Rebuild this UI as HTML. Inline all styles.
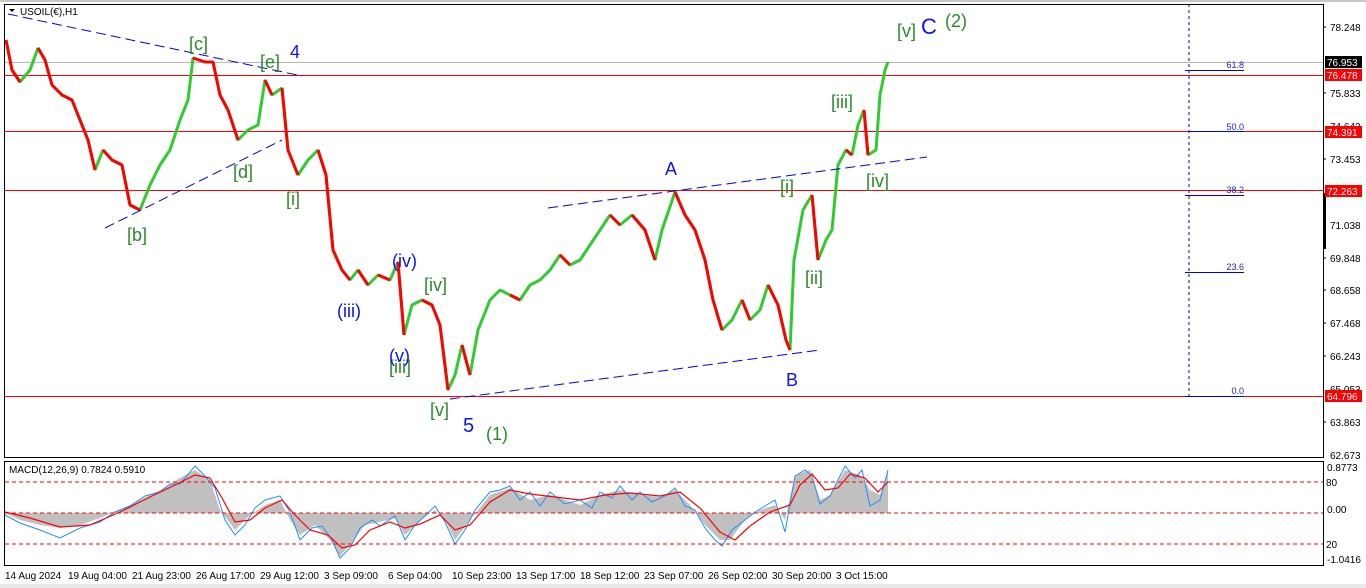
<!DOCTYPE html>
<html><head><meta charset="utf-8"><style>
html,body{margin:0;padding:0;background:#fff;width:1366px;height:588px;overflow:hidden}
svg{display:block;font-family:"Liberation Sans",Tahoma,sans-serif}
</style></head><body>
<svg width="1366" height="588" xmlns="http://www.w3.org/2000/svg">
<rect x="0" y="0" width="1366" height="588" fill="#fff"/>
<rect x="0" y="0" width="1366" height="2" fill="#c8c8c8"/>
<rect x="0" y="584" width="1366" height="4" fill="#e8e8e8"/>
<!-- horizontal lines -->
<rect x="4" y="62" width="1319" height="1" fill="#b8b8b8"/>
<rect x="4" y="75" width="1319" height="1" fill="#ff0000"/>
<rect x="4" y="131" width="1319" height="1" fill="#ff0000"/>
<rect x="4" y="190" width="1319" height="1" fill="#ff0000"/>
<rect x="4" y="396" width="1319" height="1" fill="#ff0000"/>
<!-- price -->
<path d="M6 40 L12 70 L20 82 L30 70 L38 48 L45 60 L52 85 L62 95 L72 100 L80 120 L88 140 L95 170 L103 150 L112 160 L122 165 L130 205 L140 210 L150 185 L160 165 L170 150 L180 120 L188 100 L193 58 L205 62 L213 62 L220 95 L228 110 L238 140 L248 130 L258 125 L265 80 L272 95 L282 88 L288 150 L298 175 L308 160 L318 150 L326 175 L333 250 L342 270 L350 280 L358 270 L368 285 L378 275 L390 280 L398 262 L404 335 L412 305 L422 300 L432 305 L440 325 L448 390 L455 375 L462 345 L470 375 L478 330 L490 300 L500 290 L510 295 L520 300 L530 285 L540 280 L550 270 L560 255 L570 265 L580 260 L590 245 L600 230 L610 215 L620 225 L632 215 L645 230 L655 260 L662 230 L675 192 L685 215 L695 230 L705 260 L713 300 L722 330 L732 320 L742 300 L750 320 L760 310 L768 285 L778 305 L786 340 L790 350 L794 260 L803 210 L812 195 L818 260 L826 240 L832 230 L838 165 L846 150 L852 155 L858 125 L864 110 L868 155 L876 150 L880 95 L885 70 L888 62" stroke="#2ecc2e" stroke-width="3" fill="none" stroke-linejoin="bevel"/>
<path d="M6 40 L12 70 L20 82 M38 48 L45 60 L52 85 L62 95 L72 100 L80 120 L88 140 L95 170 M103 150 L112 160 L122 165 L130 205 L140 210 M193 58 L205 62 L213 62 L220 95 L228 110 L238 140 M265 80 L272 95 M282 88 L288 150 L298 175 M318 150 L326 175 L333 250 L342 270 L350 280 M358 270 L368 285 M378 275 L390 280 M398 262 L404 335 M422 300 L432 305 L440 325 L448 390 M462 345 L470 375 M510 295 L520 300 M560 255 L570 265 M610 215 L620 225 M632 215 L645 230 L655 260 M675 192 L685 215 L695 230 L705 260 L713 300 L722 330 M742 300 L750 320 M768 285 L778 305 L786 340 L790 350 M812 195 L818 260 M846 150 L852 155 M864 110 L868 155" stroke="#ff0000" stroke-width="3" fill="none" stroke-linejoin="bevel"/>
<!-- MACD -->
<polygon points="5,513 20,520 40,525 60,528 80,525 100,518 130,505 160,490 180,478 195,470 210,480 220,510 235,530 250,515 265,505 280,500 290,520 300,535 315,525 330,540 340,556 350,545 365,525 380,522 395,518 405,535 420,520 435,510 445,520 455,540 470,520 490,495 510,488 530,500 550,495 580,505 600,495 620,490 640,495 660,497 675,490 690,505 705,525 720,540 730,540 745,520 760,510 775,505 785,520 795,475 810,470 820,500 830,495 845,470 860,475 870,490 880,495 888,470 888,513" fill="#c0c0c0"/>
<polyline points="5,515 20,523 40,530 60,538 80,528 100,522 115,512 130,506 145,496 160,492 170,484 180,484 195,466 205,476 215,488 225,520 235,535 245,525 255,508 265,500 280,496 290,512 300,540 312,528 322,526 332,540 340,558 350,548 360,528 372,520 380,526 395,516 405,540 415,525 425,516 435,506 445,522 455,544 465,530 475,510 490,492 500,490 510,486 520,500 530,492 540,506 550,492 565,504 580,500 592,508 600,492 612,498 620,486 632,500 640,492 652,502 665,496 675,488 685,506 695,510 705,528 715,540 722,546 732,530 745,520 755,512 765,506 775,500 785,532 795,476 805,470 812,476 820,504 830,496 838,480 845,466 855,478 862,470 870,506 880,500 888,470" fill="none" stroke="#1e90ff" stroke-width="1"/>
<polyline points="5,512 30,518 60,527 90,525 120,512 150,497 175,485 195,475 210,478 222,498 235,522 250,520 265,508 282,500 295,515 310,530 328,535 342,548 355,545 370,530 390,522 405,528 420,524 440,515 455,530 470,525 490,502 510,490 530,494 555,497 580,500 605,495 630,493 660,496 680,492 700,508 720,532 735,540 750,526 770,512 790,505 800,485 812,474 825,490 838,488 850,474 865,478 878,492 888,482" fill="none" stroke="#ff0000" stroke-width="1.2"/>
<!-- trend lines -->
<g stroke="#0000e0" stroke-width="1" stroke-dasharray="10,5" fill="none">
<line x1="8" y1="14" x2="302" y2="76"/>
<line x1="105" y1="228" x2="282" y2="140"/>
<line x1="548" y1="208" x2="927" y2="157"/>
<line x1="450" y1="399" x2="820" y2="350"/>
</g>
<!-- fib -->
<line x1="1189" y1="4" x2="1189" y2="396" stroke="#0000e0" stroke-dasharray="3,3"/>
<g fill="#0000e0"><rect x="1185" y="70" width="59" height="1"/><rect x="1189" y="131" width="55" height="1"/><rect x="1185" y="195" width="59" height="1"/><rect x="1185" y="272" width="59" height="1"/><rect x="1185" y="396" width="59" height="1"/></g>
<g fill="#2020c0" font-size="9" text-anchor="end"><text x="1244" y="68">61.8</text><text x="1244" y="130">50.0</text><text x="1244" y="193">38.2</text><text x="1244" y="270">23.6</text><text x="1244" y="394">0.0</text></g>
<!-- frames -->
<rect x="4.5" y="4.5" width="1319" height="453" fill="none" stroke="#000"/>
<rect x="4.5" y="461.5" width="1319" height="104" fill="none" stroke="#000"/>
<g stroke="#ff0000" stroke-dasharray="4,3"><line x1="5" y1="482" x2="1323" y2="482"/><line x1="5" y1="513" x2="1323" y2="513"/><line x1="5" y1="544" x2="1323" y2="544"/></g>
<!-- axis labels -->
<g font-size="10" fill="#000">
<text x="1330" y="31">78.248</text><text x="1330" y="97">75.833</text><text x="1330" y="130">74.643</text><text x="1330" y="163">73.453</text><text x="1330" y="229">71.038</text><text x="1330" y="262">69.848</text><text x="1330" y="294">68.658</text><text x="1330" y="327">67.468</text><text x="1330" y="360">66.243</text><text x="1330" y="393">65.053</text><text x="1330" y="426">63.863</text><text x="1330" y="459">62.673</text>
<text x="1327" y="471">0.8773</text><text x="1326" y="486">80</text><text x="1327" y="513">0.00</text><text x="1326" y="548">20</text><text x="1327" y="563">-1.0416</text>
</g>
<g stroke="#000"><line x1="1323" y1="27" x2="1326" y2="27"/><line x1="1323" y1="93" x2="1326" y2="93"/><line x1="1323" y1="159" x2="1326" y2="159"/><line x1="1323" y1="225" x2="1326" y2="225"/><line x1="1323" y1="258" x2="1326" y2="258"/><line x1="1323" y1="290" x2="1326" y2="290"/><line x1="1323" y1="323" x2="1326" y2="323"/><line x1="1323" y1="356" x2="1326" y2="356"/><line x1="1323" y1="422" x2="1326" y2="422"/></g>
<rect x="1323" y="193" width="3" height="56" fill="#000"/>
<rect x="1325" y="56" width="37" height="12" fill="#000"/><text x="1327" y="66" font-size="10" fill="#fff">76.953</text>
<rect x="1325" y="69" width="37" height="12" fill="#ff0000"/><text x="1327" y="79" font-size="10" fill="#fff">76.478</text>
<rect x="1325" y="126" width="37" height="12" fill="#ff0000"/><text x="1327" y="136" font-size="10" fill="#fff">74.391</text>
<rect x="1325" y="185" width="37" height="12" fill="#ff0000"/><text x="1327" y="195" font-size="10" fill="#fff">72.263</text>
<rect x="1325" y="390" width="37" height="12" fill="#ff0000"/><text x="1327" y="400" font-size="10" fill="#fff">64.796</text>
<!-- title -->
<path d="M9 9 L15 9 L12 12 Z" fill="#000"/>
<text x="20" y="15" font-size="10" fill="#000">USOIL(€),H1</text>
<text x="9" y="473" font-size="10" fill="#000">MACD(12,26,9) 0.7824 0.5910</text>
<!-- dates -->
<g font-size="10" fill="#000">
<text x="5" y="579">14 Aug 2024</text><text x="68" y="579">19 Aug 04:00</text><text x="132" y="579">21 Aug 23:00</text><text x="196" y="579">26 Aug 17:00</text><text x="260" y="579">29 Aug 12:00</text><text x="324" y="579">3 Sep 09:00</text><text x="388" y="579">6 Sep 04:00</text><text x="452" y="579">10 Sep 23:00</text><text x="516" y="579">13 Sep 17:00</text><text x="580" y="579">18 Sep 12:00</text><text x="644" y="579">23 Sep 07:00</text><text x="708" y="579">26 Sep 02:00</text><text x="772" y="579">30 Sep 20:00</text><text x="836" y="579">3 Oct 15:00</text>
</g>
<!-- wave labels -->
<g font-size="18" fill="#2a8a2a">
<text x="189" y="50">[c]</text><text x="260" y="68">[e]</text><text x="233" y="178">[d]</text><text x="127" y="241">[b]</text>
<text x="286" y="205">[i]</text><text x="424" y="291">[iv]</text><text x="389" y="373">[iii]</text><text x="430" y="416">[v]</text>
<text x="486" y="440">(1)</text><text x="780" y="193">[i]</text><text x="805" y="284">[ii]</text><text x="831" y="108">[iii]</text><text x="866" y="187">[iv]</text>
<text x="897" y="37">[v]</text><text x="945" y="27">(2)</text>
</g>
<g font-size="18" fill="#1010f0">
<text x="290" y="58">4</text><text x="392" y="267">(iv)</text><text x="337" y="317">(iii)</text><text x="389" y="362">(v)</text>
<text x="463" y="432" font-size="20">5</text><text x="665" y="175">A</text><text x="786" y="386">B</text><text x="921" y="34" font-size="22">C</text>
</g>
</svg>
</body></html>
